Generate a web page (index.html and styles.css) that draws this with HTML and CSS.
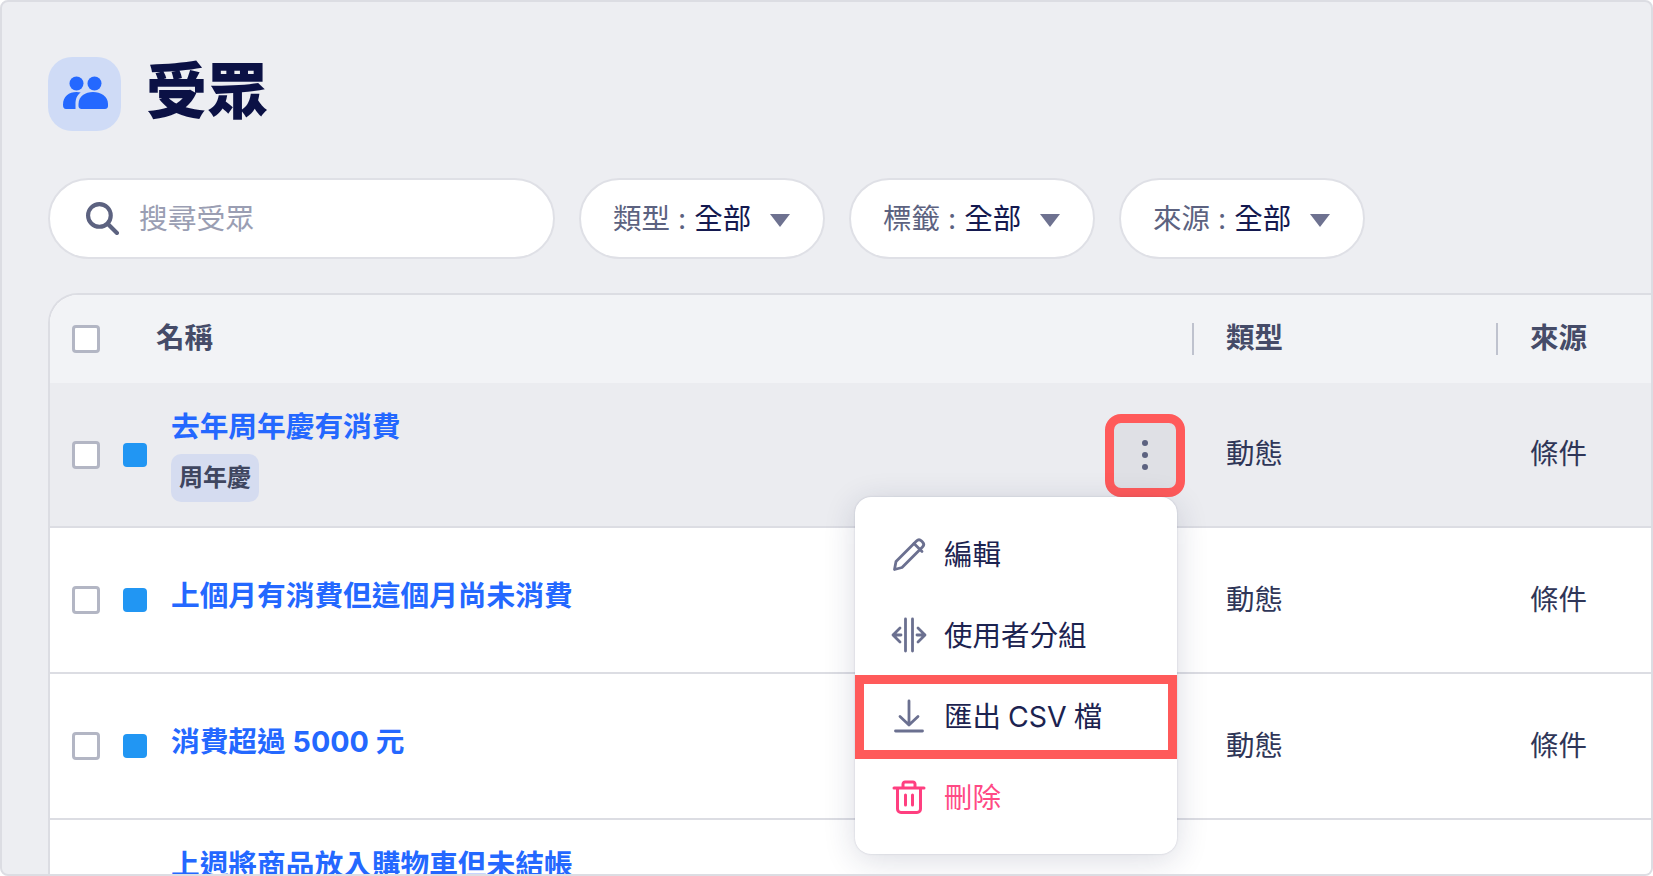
FILE: index.html
```html
<!DOCTYPE html>
<html lang="zh-Hant">
<head>
<meta charset="utf-8">
<title>受眾</title>
<link rel="stylesheet" href="styles.css">
</head>
<body>
<main class="frame">
  <header class="page-head">
    <div class="head-icon">
      <svg width="46" height="34" viewBox="0 0 46 34"><circle cx="14.500" cy="7.500" r="7" fill="#2468ff"/><circle cx="32.500" cy="7.500" r="7" fill="#2468ff"/><path d="M1 29c0-9 6-13 13.500-13 1.500 0 3 .2 4.200.5C15 19 13.500 23 13.500 28v5H4c-2 0-3-1.500-3-4z" fill="#2468ff"/><path d="M16.500 28c0-8 7-12 14.500-12s15 4 15 12v2c0 2-1.500 3-3 3H19.500c-1.500 0-3-1-3-3z" fill="#2468ff"/></svg>
    </div>
    <h1 class="title">受眾</h1>
  </header>

  <section class="toolbar">
    <div class="search">
      <svg width="33" height="33" viewBox="0 0 32 32" fill="none" stroke="#5c6280" stroke-width="4" stroke-linecap="round"><circle cx="13" cy="13" r="11"/><path d="M21.500 21.500l8.500 8.500"/></svg>
      <span class="placeholder">搜尋受眾</span>
    </div>
    <div class="pill"><span class="pill-label">類型 : </span><span class="pill-value">全部</span><span class="caret"></span></div>
    <div class="pill"><span class="pill-label">標籤 : </span><span class="pill-value">全部</span><span class="caret"></span></div>
    <div class="pill"><span class="pill-label">來源 : </span><span class="pill-value">全部</span><span class="caret"></span></div>
  </section>

  <section class="table">
    <div class="row head">
      <div class="cell-name"><span class="check"></span><span class="head-name">名稱</span></div>
      <div class="cell-type"><span class="sep"></span>類型</div>
      <div class="cell-source"><span class="sep"></span>來源</div>
    </div>

    <div class="row r1 active">
      <div class="cell-name">
        <span class="check"></span><span class="square"></span>
        <div class="name-block"><a class="link">去年周年慶有消費</a><span class="badge">周年慶</span></div>
        <button class="kebab"><i></i><i></i><i></i></button>
      </div>
      <div class="cell-type">動態</div>
      <div class="cell-source">條件</div>
      <div class="menu">
        <div class="menu-item">
          <svg width="36" height="36" viewBox="0 0 36 36" fill="none" stroke="#6b7090" stroke-width="2.800" stroke-linejoin="round" stroke-linecap="round"><path d="M3.500 33.500l1.500-8L25.500 5c1.500-1.500 3.500-1.500 5 0l1 1c1.500 1.500 1.500 3.500 0 5L11 31.500z"/><path d="M23 7.500l8 8"/></svg>
          <span>編輯</span>
        </div>
        <div class="menu-item">
          <svg width="36" height="36" viewBox="0 0 36 36" fill="none" stroke="#6b7090" stroke-width="2.800" stroke-linejoin="round" stroke-linecap="round"><path d="M14.500 2v32M21.500 2v32"/><path d="M9 11l-7 7 7 7M2 18h8M27 11l7 7-7 7M34 18h-8"/></svg>
          <span>使用者分組</span>
        </div>
        <div class="menu-item marked">
          <svg width="36" height="36" viewBox="0 0 36 36" fill="none" stroke="#6b7090" stroke-width="2.800" stroke-linecap="round" stroke-linejoin="round"><path d="M18 3v24M9 18.500l9 8.500 9-8.500"/><path d="M4.500 33h27"/></svg>
          <span>匯出 CSV 檔</span>
        </div>
        <div class="menu-item danger">
          <svg width="36" height="36" viewBox="0 0 36 36" fill="none" stroke="#ff3f80" stroke-width="3" stroke-linecap="round" stroke-linejoin="round"><path d="M3 9h30M12 9V5c0-1 1-2 2-2h8c1 0 2 1 2 2v4M6.500 9v21c0 2 1.500 3.500 3.500 3.500h16c2 0 3.500-1.500 3.500-3.500V9M14.500 16v10M21.500 16v10"/></svg>
          <span>刪除</span>
        </div>
      </div>
    </div>

    <div class="row r2">
      <div class="cell-name"><span class="check"></span><span class="square"></span><a class="link single">上個月有消費但這個月尚未消費</a></div>
      <div class="cell-type">動態</div>
      <div class="cell-source">條件</div>
    </div>

    <div class="row r2">
      <div class="cell-name"><span class="check"></span><span class="square"></span><a class="link single">消費超過 5000 元</a></div>
      <div class="cell-type">動態</div>
      <div class="cell-source">條件</div>
    </div>

    <div class="row r2">
      <div class="cell-name">
        <span class="check"></span><span class="square"></span>
        <div class="name-block"><a class="link">上週將商品放入購物車但未結帳</a><span class="badge">購物車</span></div>
      </div>
      <div class="cell-type">動態</div>
      <div class="cell-source">條件</div>
    </div>
  </section>
</main>
</body>
</html>
```

FILE: styles.css
```css
* { box-sizing: border-box; }
html, body { margin: 0; height: 100%; overflow: hidden; }
body { font-family: Inter, "Noto Sans CJK TC", sans-serif; color: #1c2350; }

.frame {
  height: 876px;
  background: #edeef2;
  border: 2px solid #dcdde3;
  border-radius: 8px;
  padding: 55px 0 0 46px;
  overflow: hidden;
}

.page-head { display: flex; align-items: center; gap: 25px; height: 74px; }
.head-icon {
  width: 73px; height: 74px;
  border-radius: 24px;
  background: #cfdbf6;
  display: flex; align-items: center; justify-content: center;
}
.head-icon svg { margin-top: -3px; margin-left: 1px; }
.title { margin: -4px 0 0; font-size: 61px; line-height: 74px; font-weight: 900; color: #0b1145; }

.toolbar { display: flex; gap: 24px; margin-top: 47px; }
.search, .pill {
  height: 81px;
  background: #fff;
  border: 2px solid #dfe0e6;
  border-radius: 41px;
  display: flex; align-items: center;
}
.search { width: 507px; padding-left: 36px; gap: 20px; }
.placeholder { font-size: 28.8px; color: #9a9eb3; margin-top: -4px; }
.pill { width: 246px; padding-left: 32px; font-size: 28.5px; white-space: pre; }
.pill-label { color: #5c6280; margin-top: -4px; }
.pill-value { color: #14194f; margin-top: -4px; }
.caret {
  margin-left: 19px;
  margin-top: 4px;
  border-left: 10px solid transparent;
  border-right: 10px solid transparent;
  border-top: 13px solid #6e7290;
}

.table {
  margin-top: 34px;
  background: #fff;
  border-top: 2px solid #dcdde3;
  border-left: 2px solid #dcdde3;
  border-top-left-radius: 30px;
}
.row {
  display: grid;
  grid-template-columns: 1142px 304px 1fr;
  align-items: center;
  font-size: 28.5px;
  position: relative;
}
.head { height: 88px; background: #f2f3f6; font-weight: 700; color: #454b68; border-top-left-radius: 28px; }
.r1 { height: 145px; border-bottom: 2px solid #dcdde3; }
.r2 { height: 146px; border-bottom: 2px solid #dcdde3; }
.active { background: #ebecf0; }

.cell-name { display: flex; align-items: center; padding: 0 7px 0 22px; height: 100%; }
.cell-type, .cell-source { padding-left: 34px; display: flex; align-items: center; height: 100%; color: #2f3658; position: relative; margin-top: -6px; }
.head .cell-type, .head .cell-source { color: #454b68; margin-top: -8px; }
.sep { position: absolute; left: 0; top: 32px; width: 2px; height: 32px; background: #bfc2ce; }

.check {
  width: 28px; height: 28px; flex: none;
  background: #fff;
  border: 3px solid #b3b6c4;
  border-radius: 4px;
}
.head-name { margin-left: 56px; margin-top: -8px; }
.square {
  width: 24px; height: 24px; flex: none;
  margin-left: 23px; margin-right: 24px;
  border-radius: 4px;
  background: #2196f3;
}
.link { color: #2468ff; font-weight: 700; font-size: 28.7px; line-height: 40px; white-space: nowrap; }
.link.single { margin-top: -8px; }
.name-block { display: flex; flex-direction: column; align-items: flex-start; gap: 7px; }
.badge {
  height: 48px; line-height: 48px;
  padding: 0 8px;
  border-radius: 10px;
  background: #d5dcf0;
  color: #3f4660;
  font-size: 24px;
  font-weight: 700;
}

.kebab {
  margin-left: auto;
  margin-top: 1px;
  width: 80px; height: 83px;
  padding: 0;
  background: #dfe0e5;
  border: 9px solid #ff5a5a;
  border-radius: 16px;
  display: flex; flex-direction: column; align-items: center; justify-content: center; gap: 6px;
}
.kebab i { width: 6px; height: 6px; border-radius: 50%; background: #5c6280; }

.menu {
  position: absolute;
  left: 805px; top: 114px;
  width: 322px; height: 357px;
  padding: 16px 0;
  background: #fff;
  border-radius: 16px;
  box-shadow: 0 6px 32px rgba(30, 40, 80, .16), 0 0 2px rgba(30, 40, 80, .2);
  z-index: 5;
}
.menu-item {
  height: 81px;
  display: flex; align-items: center; gap: 17px;
  padding-left: 36px;
  font-size: 28.5px;
  color: #1c2350;
  position: relative;
}
.menu-item svg { flex: none; }
.menu-item span { margin-top: -3px; word-spacing: -1px; }
.marked::after {
  content: "";
  position: absolute;
  left: 0; right: 0; top: 0; bottom: -3px;
  border: 9px solid #ff5a5a;
}
.danger { color: #ff4a85; }
```
